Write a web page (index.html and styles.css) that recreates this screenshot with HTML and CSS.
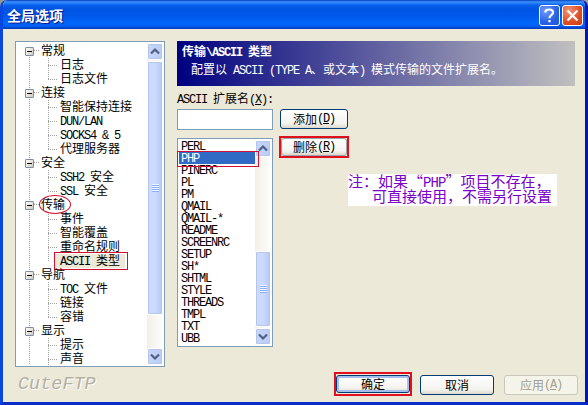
FILE: index.html
```html
<!DOCTYPE html>
<html lang="zh-CN">
<head>
<meta charset="utf-8">
<title>全局选项</title>
<link rel="stylesheet" href="styles.css">
</head>
<body>
<div class="window">
  <header class="titlebar">
    <h1>全局选项</h1>
    <span class="cap help"><svg width="21" height="21" viewBox="0 0 21 21"><path d="M6.500 7.500V6.200Q7.300 4.500 10.300 4.500Q14 4.500 14 7.500Q14 9 12 10.300Q10.500 11.300 10.500 13.300M10.500 15V17.200" fill="none" stroke="#fff" stroke-width="2.200"/></svg></span>
    <span class="cap close"><svg width="21" height="21" viewBox="0 0 21 21"><path d="M5.500 5.500L15.500 15.500M15.500 5.500L5.500 15.500" stroke="#fff" stroke-width="2.300"/></svg></span>
  </header>
  <main class="content">
    <section class="tree">
      <div class="nodes">
        <div class="group"><div class="parent"><i class="box"></i>常规</div><div class="child">日志</div><div class="child last">日志文件</div></div>
        <div class="group"><div class="parent"><i class="box"></i>连接</div><div class="child">智能保持连接</div><div class="child"><span class="l">DUN/LAN</span></div><div class="child"><span class="l">SOCKS4 &amp; 5</span></div><div class="child last">代理服务器</div></div>
        <div class="group"><div class="parent"><i class="box"></i>安全</div><div class="child"><span class="l">SSH2 </span>安全</div><div class="child last"><span class="l">SSL </span>安全</div></div>
        <div class="group"><div class="parent"><i class="box"></i>传输<i class="ring"></i></div><div class="child">事件</div><div class="child">智能覆盖</div><div class="child">重命名规则</div><div class="child last marked"><span class="l">ASCII </span>类型</div></div>
        <div class="group"><div class="parent"><i class="box"></i>导航</div><div class="child"><span class="l">TOC </span>文件</div><div class="child">链接</div><div class="child last">容错</div></div>
        <div class="group"><div class="parent"><i class="box"></i>显示</div><div class="child">提示</div><div class="child">声音</div></div>
      </div>
      <div class="scroll">
        <span class="arrow"><svg width="15" height="16" viewBox="0 0 15 16"><path d="M3 9.500L7 5.500L11 9.500" fill="none" stroke="#4d6185" stroke-width="2.200"/></svg></span>
        <span class="thumb tall"><i class="grip"></i></span>
        <span class="space"></span>
        <span class="arrow"><svg width="15" height="16" viewBox="0 0 15 16"><path d="M3 5.500L7 9.500L11 5.500" fill="none" stroke="#4d6185" stroke-width="2.200"/></svg></span>
      </div>
    </section>
    <section class="pane">
      <div class="banner">
        <h2>传输<span class="l">\ASCII </span>类型</h2>
        <p>配置以<span class="l"> ASCII (TYPE A</span>、或文本<span class="l">) </span>模式传输的文件扩展名。</p>
      </div>
      <div class="label"><span class="l">ASCII </span>扩展名<span class="l">(<u>X</u>):</span></div>
      <div class="editor">
        <div class="left">
          <div class="input"></div>
          <div class="list">
            <div class="items">
              <div class="l">PERL</div><div class="l selected">PHP</div><div class="l">PINERC</div><div class="l">PL</div><div class="l">PM</div><div class="l">QMAIL</div><div class="l">QMAIL-*</div><div class="l">README</div><div class="l">SCREENRC</div><div class="l">SETUP</div><div class="l">SH*</div><div class="l">SHTML</div><div class="l">STYLE</div><div class="l">THREADS</div><div class="l">TMPL</div><div class="l">TXT</div><div class="l">UBB</div>
            </div>
            <div class="scroll">
              <span class="arrow"><svg width="15" height="16" viewBox="0 0 15 16"><path d="M3 9.500L7 5.500L11 9.500" fill="none" stroke="#4d6185" stroke-width="2.200"/></svg></span>
              <span class="space"></span>
              <span class="thumb short"><i class="grip"></i></span>
              <span class="arrow"><svg width="15" height="16" viewBox="0 0 15 16"><path d="M3 5.500L7 9.500L11 5.500" fill="none" stroke="#4d6185" stroke-width="2.200"/></svg></span>
            </div>
          </div>
        </div>
        <div class="right">
          <div class="btn add">添加<span class="l">(<u>D</u>)</span></div>
          <div class="hot remove"><div class="btn">删除<span class="l">(<u>R</u>)</span></div></div>
          <div class="note">
            <div class="n1">注：如果<span class="quote open">“</span><span class="n">PHP</span><span class="quote">”</span>项目不存在，</div>
            <div class="n2">可直接使用，不需另行设置</div>
          </div>
        </div>
      </div>
    </section>
  </main>
  <footer class="footer">
    <span class="brand">CuteFTP</span>
    <div class="hot ok"><div class="btn default">确定</div></div>
    <div class="btn cancel">取消</div>
    <div class="btn disabled">应用<span class="l">(<u>A</u>)</span></div>
  </footer>
</div>
</body>
</html>
```
FILE: styles.css
```css
* { box-sizing: border-box; }
body {
  margin: 0;
  background: #9a9a94;
  font: 12px/14px "Noto Sans CJK SC", sans-serif;
  color: #000;
}
.window {
  width: 588px;
  height: 405px;
  background: #ece9d8;
  border: solid;
  border-width: 0 3px 3px;
  border-color: #0a3fd8 #0019a8 #0a2fc8 #0848e0;
  border-radius: 7px 7px 0 0;
  overflow: hidden;
}
.l {
  font-family: "Liberation Mono", monospace;
  font-size: 12px;
  letter-spacing: -1.2px;
  white-space: pre;
}
u { text-underline-offset: 1px; }

.titlebar {
  display: flex;
  align-items: center;
  gap: 2px;
  height: 29px;
  margin: 0 -3px;
  padding: 2px 5px 0 7px;
  background: linear-gradient(#0842c0 0, #3a92ff 2px, #0a62ee 5px, #0054e3 9px, #0058ea 16px, #0066fc 23px, #0060f4 26px, #0038b8 29px);
}
.titlebar h1 {
  flex: 1;
  margin: -2px 0 0;
  font-size: 14px;
  line-height: 20px;
  font-weight: 700;
  color: #fff;
  text-shadow: 1px 1px 1px #0a1883;
}
.cap {
  width: 21px;
  height: 21px;
  border: 1px solid #fff;
  border-radius: 3px;
}
.cap svg { display: block; margin: -1px; }
.help { background: radial-gradient(circle at 30% 25%, #6f9cf8, #2860e4 60%, #2458d8); }
.close { background: radial-gradient(circle at 30% 25%, #f09478, #e04c22 60%, #c83c14); }

.content {
  display: flex;
  gap: 12px;
  height: 338px;
  padding: 12px 10px 0 12px;
}
.tree {
  display: flex;
  width: 150px;
  height: 326px;
  padding: 1px;
  background: #fff;
  border: 1px solid #7f9db9;
}
.nodes {
  flex: 1;
  padding-top: 1px;
  background: repeating-linear-gradient(#a0a0a0 0 1px, transparent 1px 2px) 12px 8px / 1px 100% no-repeat;
}
.parent {
  position: relative;
  display: flex;
  align-items: center;
  height: 14px;
  padding: 0 0 2px 8px;
}
.parent::before {
  content: "";
  width: 5px;
  margin: 0 2px 0 9px;
  border-top: 1px dotted #a0a0a0;
}
.box {
  position: absolute;
  left: 8px;
  top: 3px;
  width: 9px;
  height: 9px;
  border: 1px solid #7b8ea5;
  border-radius: 1px;
  background: linear-gradient(#000, #000) 1px 3px / 5px 1px no-repeat, linear-gradient(135deg, #fff, #cfc9bd);
}
.ring {
  position: absolute;
  left: 22px;
  top: -3px;
  width: 32px;
  height: 19px;
  border: 1px solid #d01030;
  border-radius: 50%;
}
.child {
  height: 14px;
  padding-left: 12px;
  margin-left: 31px;
  line-height: 12px;
  white-space: nowrap;
  background:
    repeating-linear-gradient(#a0a0a0 0 1px, transparent 1px 2px) 0 0 / 1px 100% no-repeat,
    repeating-linear-gradient(90deg, #a0a0a0 0 1px, transparent 1px 2px) 0 7px / 9px 1px no-repeat;
}
.child.last { background-size: 1px 8px, 9px 1px; }
.child.marked {
  position: relative;
  width: 78px;
  background:
    repeating-linear-gradient(#a0a0a0 0 1px, transparent 1px 2px) 0 0 / 1px 8px no-repeat,
    linear-gradient(#ece9d8, #ece9d8) 7px 0 / 70px 14px no-repeat;
}
.marked::after {
  content: "";
  position: absolute;
  left: 6px;
  top: -2px;
  width: 72px;
  height: 16px;
  border: 1px solid #d01030;
}

.scroll {
  display: flex;
  flex-direction: column;
  width: 16px;
  gap: 1px;
  background: linear-gradient(90deg, #f1efe6, #fefefb);
}
.arrow, .thumb {
  flex: none;
  border: 1px solid #fff;
  border-radius: 2px;
  background: linear-gradient(90deg, #c8d6fb, #bacbf6);
  box-shadow: inset 0 0 0 1px #b4c6ee;
}
.arrow { height: 17px; }
.arrow svg { display: block; }
.thumb {
  display: flex;
  align-items: center;
  justify-content: center;
  background: linear-gradient(90deg, #cbdafd 50%, #b5c8f5);
}
.tall { height: 254px; }
.short { height: 76px; }
.space { flex: 1; }
.grip {
  width: 7px;
  height: 8px;
  background: repeating-linear-gradient(#eef4fe 0 1px, #8cb0f8 1px 2px);
}

.pane { flex: 1; }
.banner {
  height: 45px;
  padding: 3px 0 0 5px;
  color: #fff;
  background: linear-gradient(90deg, #000080, #c0c0c0);
}
.banner h2 {
  margin: 0;
  font-size: 12px;
  line-height: 14px;
}
.banner p {
  margin: 1px 0 0 9px;
  line-height: 15px;
  white-space: nowrap;
}
.label { height: 23px; padding-top: 5px; }
.editor { display: flex; gap: 6px; }
.left { width: 96px; }
.input {
  height: 21px;
  background: #fff;
  border: 1px solid #7f9db9;
}
.list {
  display: flex;
  height: 209px;
  margin-top: 8px;
  padding: 1px;
  background: #fff;
  border: 1px solid #7f9db9;
}
.items { flex: 1; }
.items div {
  height: 12px;
  padding-left: 2px;
  line-height: 14px;
}
.items .selected {
  position: relative;
  color: #fff;
  background: #316ac5;
}
.selected::after {
  content: "";
  position: absolute;
  left: -2px;
  top: -1px;
  width: 80px;
  height: 14px;
  border: 1px solid #d01030;
}
.btn {
  display: flex;
  align-items: center;
  justify-content: center;
  height: 20px;
  padding-bottom: 1px;
  border: 1px solid #003c74;
  border-radius: 3px;
  background: linear-gradient(#fff, #f4f3ee 75%, #dcd7cb);
}
.add { width: 68px; margin: 0 0 7px 1px; }
.hot {
  border: 2px solid #e0101c;
  background: #ece9d8;
}
.remove { width: 70px; height: 22px; }
.remove .btn { height: 18px; border-color: #98a4ac; }
.note {
  width: 209px;
  height: 32px;
  margin: 16px 0 0 69px;
  background: #fff;
  color: #7800c8;
  font-size: 15px;
  line-height: 14px;
  white-space: nowrap;
}
.n {
  font-family: "Liberation Mono", monospace;
  font-size: 14px;
  letter-spacing: -0.9px;
}
.quote { display: inline-block; width: 15px; }
.open { text-align: right; }
.n1 { height: 15px; }
.n2 { padding-left: 24px; }

.footer { display: flex; height: 35px; padding-top: 8px; }
.brand {
  width: 318px;
  padding-left: 15px;
  margin-right: 13px;
  font: italic 18.500px/20px "Liberation Mono", monospace;
  color: #b4b0a2;
  text-shadow: 1px 1px 0 #fff;
}
.ok { width: 78px; height: 24px; margin-top: -3px; padding: 1px 0; }
.ok .btn { height: 18px; }
.default { box-shadow: inset 0 0 0 2px #a6c0ee; }
.cancel { width: 74px; margin-left: 8px; }
.disabled {
  width: 74px;
  margin-left: 10px;
  color: #a1a192;
  background: #f5f4ea;
  border-color: #c9c7ba;
}
```
